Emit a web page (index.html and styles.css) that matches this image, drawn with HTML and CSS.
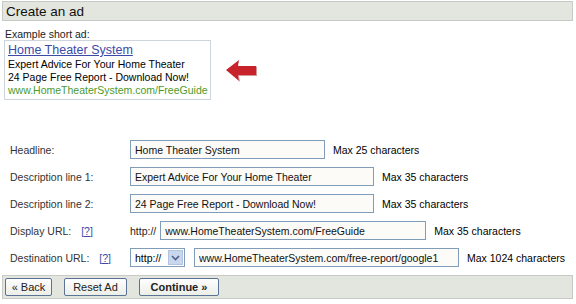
FILE: index.html
```html
<!DOCTYPE html>
<html>
<head>
    <title>Create an ad</title>
    <link rel="stylesheet" href="styles.css">
</head>
<body>
    <div class="page">
        <div class="bar title">Create an ad</div>

        <div class="example-label">Example short ad:</div>
        <div class="example-row">
            <div class="ad">
                <a class="ad-title" href="#">Home Theater System</a>
                <div>Expert Advice For Your Home Theater</div>
                <div>24 Page Free Report - Download Now!</div>
                <div class="ad-url">www.HomeTheaterSystem.com/FreeGuide</div>
            </div>
            <svg class="arrow" width="33" height="24" viewBox="0 0 33 24">
                <polygon points="1,11 14,1 13,7 31,7 31,16 13,16 14,22" fill="#c8222a"/>
                <polygon points="31,7 32,8 32,17 14,17 15,23 14,22 13,16 31,16" fill="#9a1a1f" opacity="0.45"/>
            </svg>
        </div>

        <form class="ad-form">
            <div class="row">
                <label class="lbl">Headline:</label>
                <div class="field">
                    <input class="txt w-head" type="text" value="Home Theater System">
                    <span class="max">Max 25 characters</span>
                </div>
            </div>
            <div class="row">
                <label class="lbl">Description line 1:</label>
                <div class="field">
                    <input class="txt w-desc" type="text" value="Expert Advice For Your Home Theater">
                    <span class="max">Max 35 characters</span>
                </div>
            </div>
            <div class="row">
                <label class="lbl">Description line 2:</label>
                <div class="field">
                    <input class="txt w-desc" type="text" value="24 Page Free Report - Download Now!">
                    <span class="max">Max 35 characters</span>
                </div>
            </div>
            <div class="row">
                <label class="lbl">Display URL: <a class="help" href="#">[?]</a></label>
                <div class="field">
                    <span class="prefix">http://</span>
                    <input class="txt w-disp" type="text" value="www.HomeTheaterSystem.com/FreeGuide">
                    <span class="max">Max 35 characters</span>
                </div>
            </div>
            <div class="row">
                <label class="lbl">Destination URL: <a class="help" href="#">[?]</a></label>
                <div class="field">
                    <div class="select">
                        <span>http://</span>
                        <span class="drop">
                            <svg width="9" height="6" viewBox="0 0 9 6"><polyline points="1,1 4.5,4.5 8,1" fill="none" stroke="#4d6185" stroke-width="1.6"/></svg>
                        </span>
                    </div>
                    <input class="txt w-dest" type="text" value="www.HomeTheaterSystem.com/free-report/google1">
                    <span class="max">Max 1024 characters</span>
                </div>
            </div>
        </form>

        <div class="bar actions">
            <button type="button" class="btn w-back">&laquo; Back</button>
            <button type="button" class="btn w-reset">Reset Ad</button>
            <button type="button" class="btn btn-main">Continue &raquo;</button>
        </div>
    </div>
</body>
</html>
```

FILE: styles.css
```css
body { margin: 0; background: #fff; color: #000; font-family: "Liberation Sans", Arial, sans-serif; font-size: 10.5px; }
.page { padding: 1px 3px 0 2px; }
.bar { background: #e3e6df; border: 1px solid #c8cac5; }
.title { height: 18px; line-height: 19px; font-size: 13.5px; padding-left: 3px; color: #111; }

.example-label { margin: 7px 0 0 3px; line-height: 12px; color: #222; }
.example-row { display: flex; align-items: center; gap: 14px; margin-left: 2px; }
.ad { width: 202px; border: 1px solid #cdd4dc; padding: 2px 0 2px 3px; line-height: 13px; }
.ad-title { display: block; font-size: 12.5px; line-height: 15px; color: #3a4aa8; }
.ad-url { color: #4c9a2a; }
.arrow { margin-top: 2px; }

.ad-form { margin: 36px 0 0 8px; }
.row { display: flex; align-items: center; height: 27px; }
.lbl { width: 120px; color: #333; }
.help { margin-left: 7px; color: #3a4aa8; }
.field { display: flex; align-items: center; gap: 8px; }
.txt { box-sizing: border-box; height: 19px; border: 1px solid #7f9db9; background: #fcfbf7; padding: 0 4px; font-family: inherit; font-size: 10.5px; color: #111; }
.w-head { width: 195px; }
.w-desc { width: 244px; }
.w-disp { width: 266px; margin-left: -4px; }
.w-dest { width: 265px; margin-left: 1px; }
.prefix { color: #222; }
.select { box-sizing: border-box; display: flex; align-items: center; justify-content: space-between; width: 55px; height: 19px; border: 1px solid #7f9db9; padding: 0 1px 0 4px; }
.drop { display: flex; align-items: center; justify-content: center; width: 15px; height: 15px; background: #c8d6ee; border: 1px solid #b4c4e0; box-sizing: border-box; }

.actions { display: flex; gap: 12px; height: 22px; align-items: center; margin-top: 4px; padding-left: 2px; }
.btn { box-sizing: border-box; height: 18px; padding: 0; border: 1px solid #5b7394; border-radius: 2px; background: linear-gradient(#fefefe, #eceee8); font-family: inherit; font-size: 11px; color: #222; }
.w-back { width: 47px; }
.w-reset { width: 63px; }
.btn-main { width: 80px; font-weight: bold; }
```
